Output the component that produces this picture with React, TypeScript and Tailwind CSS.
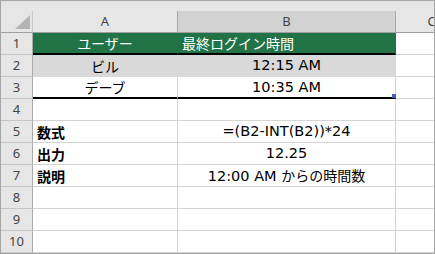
import React from "react";

const hdr = "font-['Noto_Sans',sans-serif] text-[13px] text-[#444]";
const cellFont = "font-['DejaVu_Sans','Noto_Sans_CJK_JP',sans-serif] text-[14.5px] text-black";
const jp = "font-['Noto_Sans_CJK_JP',sans-serif] text-[14px]";

function RowHead({ n }: { n: number }) {
  return (
    <div className={`w-[32px] shrink-0 h-[22px] bg-[#e6e6e6] border-r border-r-[#ababab] border-b border-b-[#c6c6c6] flex items-center justify-center ${hdr}`}>
      {n}
    </div>
  );
}

type Cell = {
  content?: React.ReactNode;
  cls?: string;
  align?: "center" | "left";
};

function DataCell({ w, c }: { w: string; c: Cell }) {
  const base = c.cls ?? "bg-white border-r border-b border-[#d4d4d4]";
  return (
    <div
      className={`${w} shrink-0 h-[22px] flex items-center leading-none whitespace-nowrap overflow-visible ${
        c.align === "left" ? "justify-start pl-[4px]" : "justify-center"
      } ${cellFont} ${base}`}
    >
      {c.content}
    </div>
  );
}

function Row({ n, a, b, children }: { n: number; a: Cell; b: Cell; children?: React.ReactNode }) {
  return (
    <div className="flex h-[22px]">
      <RowHead n={n} />
      <DataCell w="w-[145px]" c={a} />
      <div className="relative shrink-0">
        <DataCell w="w-[218px]" c={b} />
        {children}
      </div>
      <div className="w-[72px] shrink-0 h-[22px] bg-white border-r border-b border-[#d4d4d4]" />
    </div>
  );
}

export default function App() {
  const green = "bg-[#217346] border-r border-r-[#217346] border-b-2 border-b-black text-white";
  const gray = "bg-[#d9d9d9] border-r border-b border-[#d9d9d9]";
  const white3 = "bg-white border-r border-r-[#d4d4d4] border-b-2 border-b-black";
  return (
    <div className="w-[435px] h-[254px] border border-[#a5a5a5] bg-[#e6e6e6] overflow-hidden">
      <div className="h-[10px]" />
      <div className="flex h-[22px]">
        <div className="relative w-[32px] shrink-0 h-[22px] bg-[#e6e6e6] border-r border-r-[#c8c8c8] border-b border-b-[#9e9e9e]">
          <svg className="absolute left-0 top-0" width="31" height="21" viewBox="0 0 31 21">
            <polygon points="29,4 29,18 14,18" fill="#b4b4b4" />
          </svg>
        </div>
        <div className={`w-[145px] shrink-0 h-[22px] bg-[#e6e6e6] border-r border-r-[#ababab] border-b border-b-[#9e9e9e] flex items-center justify-center ${hdr}`}>
          A
        </div>
        <div className={`w-[218px] shrink-0 h-[22px] bg-[#d2d2d2] border-r border-r-[#ababab] border-b border-b-[#9e9e9e] flex items-center justify-center ${hdr}`}>
          B
        </div>
        <div className={`w-[72px] shrink-0 h-[22px] bg-[#e6e6e6] border-r border-r-[#ababab] border-b border-b-[#9e9e9e] flex items-center justify-center ${hdr}`}>
          C
        </div>
      </div>
      <Row
        n={1}
        a={{ content: <span className={jp}>ユーザー</span>, cls: green }}
        b={{ content: <span className={jp}>最終ログイン時間</span>, cls: green, align: "left" }}
      />
      <Row n={2} a={{ content: <span className={jp}>ビル</span>, cls: gray }} b={{ content: "12:15 AM", cls: gray }} />
      <Row n={3} a={{ content: <span className={jp}>デーブ</span>, cls: white3 }} b={{ content: "10:35 AM", cls: white3 }}>
        <div className="absolute right-0 bottom-[1px] w-[4px] h-[4px] bg-[#4a5fc4]" />
      </Row>
      <Row n={4} a={{}} b={{}} />
      <Row n={5} a={{ content: <span className={`${jp} font-bold`}>数式</span>, align: "left" }} b={{ content: "=(B2-INT(B2))*24" }} />
      <Row n={6} a={{ content: <span className={`${jp} font-bold`}>出力</span>, align: "left" }} b={{ content: "12.25" }} />
      <Row
        n={7}
        a={{ content: <span className={`${jp} font-bold`}>説明</span>, align: "left" }}
        b={{ content: <span>12:00 AM <span className={jp}>からの時間数</span></span> }}
      />
      <Row n={8} a={{}} b={{}} />
      <Row n={9} a={{}} b={{}} />
      <Row n={10} a={{}} b={{}} />
    </div>
  );
}
